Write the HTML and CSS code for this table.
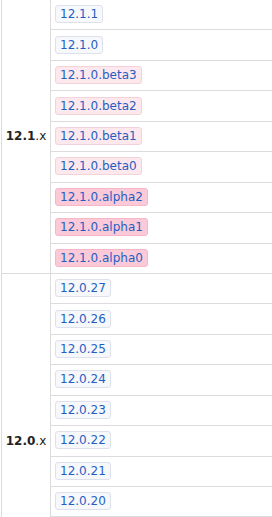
FILE: index.html
```html
<!DOCTYPE html>
<html>
<head>
<meta charset="utf-8">
<link rel="stylesheet" href="styles.css">
</head>
<body>
<div class="table">
  <div class="group">
    <div class="label"><b>12.1</b>.x</div>
    <div class="rows">
      <div class="row"><span class="tag">12.1.1</span></div>
      <div class="row"><span class="tag">12.1.0</span></div>
      <div class="row"><span class="tag beta">12.1.0.beta3</span></div>
      <div class="row"><span class="tag beta">12.1.0.beta2</span></div>
      <div class="row"><span class="tag beta">12.1.0.beta1</span></div>
      <div class="row"><span class="tag beta">12.1.0.beta0</span></div>
      <div class="row"><span class="tag alpha">12.1.0.alpha2</span></div>
      <div class="row"><span class="tag alpha">12.1.0.alpha1</span></div>
      <div class="row"><span class="tag alpha">12.1.0.alpha0</span></div>
    </div>
  </div>
  <div class="group">
    <div class="label"><b>12.0</b>.x</div>
    <div class="rows">
      <div class="row"><span class="tag">12.0.27</span></div>
      <div class="row"><span class="tag">12.0.26</span></div>
      <div class="row"><span class="tag">12.0.25</span></div>
      <div class="row"><span class="tag">12.0.24</span></div>
      <div class="row"><span class="tag">12.0.23</span></div>
      <div class="row"><span class="tag">12.0.22</span></div>
      <div class="row"><span class="tag">12.0.21</span></div>
      <div class="row"><span class="tag">12.0.20</span></div>
      <div class="row"><span class="tag">12.0.19</span></div>
      <div class="row"><span class="tag">12.0.18</span></div>
      <div class="row"><span class="tag">12.0.17</span></div>
    </div>
  </div>
</div>
</body>
</html>
```
FILE: styles.css
```css
html, body {
  margin: 0;
  padding: 0;
  background: #fff;
}
body {
  font-family: "DejaVu Sans", Verdana, sans-serif;
  font-size: 12px;
  overflow: hidden;
}
.table {
  margin-left: 1px;
  border-left: 1px solid #dcdcdc;
}
.group {
  display: grid;
  grid-template-columns: 49px 1fr;
}
.label {
  display: flex;
  align-items: center;
  justify-content: center;
  border-right: 1px solid #dcdcdc;
  border-bottom: 1px solid #dcdcdc;
  color: #222;
  font-size: 12px;
}
.label b {
  font-weight: bold;
}
.row {
  box-sizing: border-box;
  height: 30.44px;
  border-bottom: 1px solid #dcdcdc;
  display: flex;
  align-items: center;
  padding-left: 4px;
  padding-bottom: 1px;
}
.tag {
  display: inline-block;
  line-height: 14px;
  padding: 1px 4px;
  border: 1px solid #dde1ea;
  border-radius: 3px;
  background: #f7f8fc;
  color: #1f5fc4;
  white-space: nowrap;
}
.tag.beta {
  background: #fde8ed;
  border-color: #f3d3da;
}
.tag.alpha {
  background: #fbc9d7;
  border-color: #f3b7c7;
}
```
